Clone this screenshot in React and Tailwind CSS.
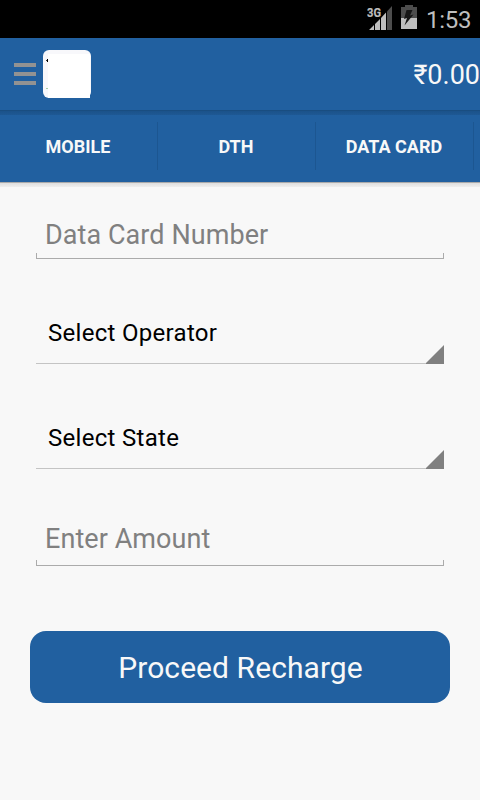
import React from "react";

function StatusBar() {
  return (
    <header className="flex h-[38px] items-start bg-black pl-[367px] text-[#bebebe]">
      <svg className="mt-[5px] h-[26px] w-[26px] shrink-0" viewBox="0 0 26 26">
        <path d="M20 6.500 25 1v24h-5z" fill="#4d4d4d" />
        <path d="M2 25 7 20v5zM8 19l5-5v11H8zM14 13l5-5.500V25h-5z" fill="#bebebe" />
        <text x="0" y="12" fontSize="13.500" fontWeight="700" textLength="14" lengthAdjust="spacingAndGlyphs" fill="#bebebe" stroke="#bebebe" strokeWidth="0.200">3G</text>
      </svg>
      <svg className="ml-2 mt-[5px] h-[25px] w-4 shrink-0" viewBox="0 0 16 25">
        <path d="M4 0h8v2h4v11H0V2h4z" fill="#4d4d4d" />
        <path d="M0 13h16v11H0z" fill="#bebebe" />
        <path d="M5.500 5h6L9 10.500 12.500 9.500 3.500 20.500l2.500-7.500L3 14z" fill="#161616" />
      </svg>
      <span className="ml-[9px] mt-1 text-[24px] leading-8 tracking-[-0.3px]">1:53</span>
    </header>
  );
}

function ActionBar() {
  return (
    <div className="flex h-[72px] items-center bg-[#2160a0] pl-[14px]">
      <div className="flex w-[22px] flex-col gap-[5px]">
        <i className="h-1 bg-[#929292]" />
        <i className="h-1 bg-[#929292]" />
        <i className="h-1 bg-[#929292]" />
      </div>
      <svg className="ml-[7px] h-12 w-12" viewBox="0 0 48 48">
        <rect width="48" height="48" rx="6" fill="#f8f8fb" />
        <path d="M5 4h42v44H5z" fill="#fff" />
        <path d="M4 9h1v3H4z" fill="#000" />
        <path d="M3 10h1v1H3z" fill="#333" />
        <path d="M3 38h2v1H3z" fill="#a5cfa5" />
      </svg>
      <span className="ml-auto whitespace-nowrap pt-0.5 text-[27px] leading-8 text-[#f8f8f8]">₹0.00</span>
    </div>
  );
}

function Tab({ children }) {
  return (
    <div className="mt-[7px] flex h-12 w-[158px] shrink-0 items-center justify-center border-r border-[#1c5691] text-[18px] font-bold text-[#f8f8f8]">
      <span className="-ml-px">{children}</span>
    </div>
  );
}

function Tabs() {
  return (
    <nav>
      <div className="h-px bg-[#194d80]" />
      <div className="h-1 bg-linear-to-b from-[#1b528a] to-[#1e5894]" />
      <div className="flex h-[67px] overflow-hidden bg-[#2160a0]">
        <Tab>MOBILE</Tab>
        <Tab>DTH</Tab>
        <Tab>DATA CARD</Tab>
      </div>
      <div className="h-px bg-[#aaaaaa]" />
      <div className="h-1 bg-linear-to-b from-[#dedede] to-[#efefef]" />
    </nav>
  );
}

function Field({ children, gap = "mt-0.5" }) {
  return (
    <div className="mx-9">
      <div className="pl-[9px] text-[27px] leading-8 tracking-[0.07px] text-[#808080]">{children}</div>
      <div className={`${gap} h-1.5 border-x border-b border-[#ababab]`} />
    </div>
  );
}

function Spinner({ children }) {
  return (
    <div className="mx-9 flex h-12 justify-between border-b border-[#c4c4c4] pl-3 text-[24px] leading-8 tracking-[0.3px] text-black">
      <span className="pt-px">{children}</span>
      <svg className="mt-[29px] -mb-px h-[19px] w-[18px]" viewBox="0 0 18 19">
        <path d="M18 0v19H0v-1z" fill="#808080" />
      </svg>
    </div>
  );
}

export default function App() {
  return (
    <div className="h-[800px] w-[480px] overflow-hidden bg-[#f8f8f8] font-[Roboto,sans-serif]">
      <StatusBar />
      <ActionBar />
      <Tabs />
      <main className="flex flex-col pt-8">
        <Field>Data Card Number</Field>
        <div className="mt-[57px]"><Spinner>Select Operator</Spinner></div>
        <div className="mt-[57px]"><Spinner>Select State</Spinner></div>
        <div className="mt-[54px]"><Field gap="mt-[5px]">Enter Amount</Field></div>
        <button className="mx-[30px] mt-[65px] h-[72px] rounded-[16px] bg-[#2160a0] pl-px text-[30px] tracking-[0.07px] text-[#f8f8f8]">
          Proceed Recharge
        </button>
      </main>
    </div>
  );
}
